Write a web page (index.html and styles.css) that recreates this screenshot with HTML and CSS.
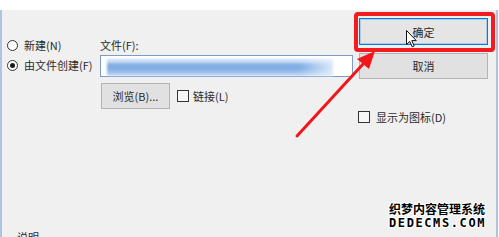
FILE: index.html
```html
<!DOCTYPE html>
<html lang="zh-CN">
<head>
<meta charset="utf-8">
<title>插入对象</title>
<link rel="stylesheet" href="styles.css">
</head>
<body>
<div class="topband"></div>
<div class="dialog">
  <div class="main">
    <div class="col-left">
      <div class="radio-row"><span class="radio"></span><span>新建(N)</span></div>
      <div class="radio-row"><span class="radio checked"></span><span>由文件创建(F)</span></div>
    </div>
    <div class="col-mid">
      <div class="field-label">文件(F):</div>
      <div class="textbox"><div class="mosaic"></div></div>
      <div class="mid-row">
        <div class="btn browse">浏览(B)...</div>
        <div class="check-row link"><span class="checkbox"></span><span>链接(L)</span></div>
      </div>
    </div>
    <div class="col-right">
      <div class="btn default">确定</div>
      <div class="btn cancel">取消</div>
      <div class="check-row icon-opt"><span class="checkbox"></span><span>显示为图标(D)</span></div>
    </div>
  </div>
  <div class="result-label">说明</div>
</div>

<div class="highlight"></div>
<svg class="arrow" width="499" height="237" viewBox="0 0 499 237">
  <line x1="297" y1="136" x2="364" y2="63" stroke="#f4151b" stroke-width="3" stroke-linecap="round"/>
  <polygon points="375,51 369,69 357,59" fill="#f4151b"/>
</svg>
<svg class="cursor" width="12" height="18" viewBox="0 0 12 18">
  <path d="M0.5 0.5 L0.5 14.5 L3.8 11.4 L6.2 16.8 L8.2 15.9 L5.8 10.6 L10.3 10.6 Z" fill="#fff" stroke="#111" stroke-width="1"/>
</svg>
<div class="watermark">
  <div class="wm-cn">织梦内容管理系统</div>
  <div class="wm-en">DEDECMS.COM</div>
</div>
</body>
</html>
```

FILE: styles.css
```css
html, body {
  margin: 0;
  padding: 0;
}
body {
  width: 499px;
  height: 237px;
  overflow: hidden;
  background: #ffffff;
  font-family: "Noto Sans CJK SC", "Microsoft YaHei", sans-serif;
  font-size: 11px;
  color: #2a2a2a;
  position: relative;
}
.topband {
  height: 10px;
  background: #ffffff;
}
.dialog {
  height: 227px;
  margin-right: 1px;
  background: #f0f0f0;
  border-left: 2px solid #a9c5e2;
  border-right: 2px solid #a9c5e2;
  overflow: hidden;
  display: flex;
  flex-direction: column;
}
.main {
  height: 220px;
  flex: none;
  display: flex;
}
.col-left {
  width: 93px;
  padding-left: 5px;
  padding-top: 25px;
}
.radio-row {
  height: 20px;
  display: flex;
  align-items: center;
  gap: 6px;
  white-space: nowrap;
}
.radio {
  width: 9px;
  height: 9px;
  border: 1px solid #333;
  border-radius: 50%;
  background: #fff;
  position: relative;
  flex: none;
}
.radio.checked::after {
  content: "";
  position: absolute;
  left: 2px;
  top: 2px;
  width: 5px;
  height: 5px;
  border-radius: 50%;
  background: #1a1a1a;
}
.col-mid {
  width: 253px;
  padding-top: 28px;
}
.field-label {
  line-height: 14px;
  height: 14px;
  margin-bottom: 3px;
}
.textbox {
  height: 20px;
  border: 1px solid #7a9cc6;
  background: #fff;
  display: flex;
  align-items: center;
  padding-left: 6px;
}
.mosaic {
  width: 226px;
  height: 17px;
  margin-top: 2px;
  background:
    linear-gradient(90deg, rgba(255,255,255,0) 0%, rgba(255,255,255,0) 85%, rgba(230,240,252,0.9) 100%),
    linear-gradient(180deg, #c9dcf4 0%, #c9dcf4 22%, #8db6e9 22%, #7eaae4 55%, #9fc2ee 78%, #c6daf4 100%);
  filter: blur(1.2px);
}
.mid-row {
  display: flex;
  align-items: center;
  margin-top: 6px;
  gap: 7px;
}
.btn {
  box-sizing: border-box;
  display: flex;
  align-items: center;
  justify-content: center;
  background: #e1e1e1;
  border: 1px solid #b4b4b4;
  white-space: nowrap;
}
.browse {
  width: 69px;
  height: 26px;
  margin-left: 1px;
}
.check-row {
  display: flex;
  align-items: center;
  white-space: nowrap;
  line-height: 14px;
}
.checkbox {
  box-sizing: border-box;
  width: 12px;
  height: 12px;
  border: 1px solid #333;
  background: #f7f7f7;
  flex: none;
}
.link {
  gap: 4px;
}
.col-right {
  width: 129px;
  margin-left: 6px;
  padding-top: 8px;
}
.default {
  height: 27px;
  border: 1px solid #0a78d4;
  box-shadow: inset 0 0 0 1px #a9cdee;
  background: #e5e5e5;
}
.cancel {
  height: 26px;
  margin-top: 8px;
}
.icon-opt {
  margin-top: 31px;
  margin-left: -1px;
  gap: 6px;
  height: 14px;
}
.result-label {
  line-height: 14px;
  padding-left: 15px;
  flex: none;
}
.highlight {
  position: absolute;
  left: 354px;
  top: 12px;
  width: 133px;
  height: 32px;
  border: 4px solid #f21b1f;
  border-radius: 4px;
}
.arrow {
  position: absolute;
  left: 0;
  top: 0;
}
.cursor {
  position: absolute;
  left: 406px;
  top: 30px;
}
.watermark {
  position: absolute;
  left: 389px;
  top: 201px;
  color: #000;
  text-shadow: 1px 0 0 #fff, -1px 0 0 #fff, 0 1px 0 #fff, 0 -1px 0 #fff,
               1px 1px 0 #fff, -1px -1px 0 #fff, 1px -1px 0 #fff, -1px 1px 0 #fff;
}
.wm-cn {
  font-size: 12px;
  font-weight: bold;
  line-height: 16px;
  height: 16px;
}
.wm-en {
  font-family: "DejaVu Sans Mono", monospace;
  font-size: 12px;
  font-weight: bold;
  line-height: 12px;
  letter-spacing: 1.6px;
}
```
